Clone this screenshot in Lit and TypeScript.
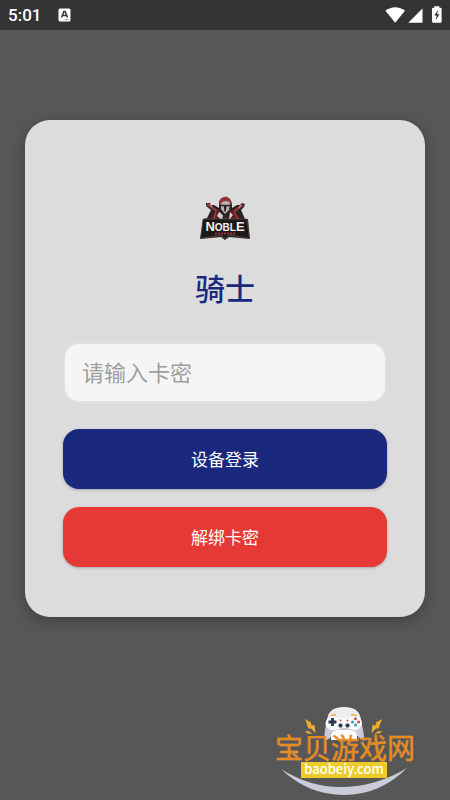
import { LitElement, html, css, svg } from "lit";
import { customElement, state } from "lit/decorators.js";

@customElement("status-bar")
class StatusBar extends LitElement {
  static styles = css`
    :host {
      display: flex;
      align-items: center;
      justify-content: space-between;
      height: 30px;
      padding: 0 8px;
      background: #343434;
      color: #fff;
      font-family: Roboto, sans-serif;
      font-size: 17px;
      font-weight: 500;
      line-height: 32px;
    }
    .group { display: flex; align-items: center; }
    .left { gap: 17px; }
    svg { display: block; }
  `;

  render() {
    return html`
      <div class="group left">
        <span>5:01</span>
        <svg width="13" height="14" viewBox="0 0 13 14" aria-hidden="true">
          <rect x="0.5" y="0.5" width="12" height="13" rx="1.5" fill="#fff" />
          <path d="M3.500 9.500 5.900 3.400h1.200l2.400 6.100M4.600 7.600h3.800" fill="none" stroke="#333" stroke-width="1.500" />
          <path d="M6.500 11.600H11" stroke="#aaa" />
        </svg>
      </div>
      <svg width="58" height="18" viewBox="384 6 58 18" aria-hidden="true">
        <path d="M385.400 10.800C391 6 399.400 6 405 10.800L395.200 22.800Z" fill="#fff" />
        <path d="M408.300 22.700 422.500 8.400V22.700Z" fill="#fff" />
        <path d="M434.300 6.200h5v1.600h1q1.300 0 1.300 1.300v12.300q0 1.300-1.300 1.300h-7q-1.300 0-1.300-1.300V9.100q0-1.300 1.300-1.300h1Z" fill="#fff" />
        <path d="M438 9.800 434.300 15.600h2.300l-.8 4.600 3.600-6h-2.200Z" fill="#333" />
      </svg>
    `;
  }
}

@customElement("knight-emblem")
class KnightEmblem extends LitElement {
  static styles = css`
    :host { display: block; }
    svg { display: block; }
    .name {
      font-family: "Liberation Sans", sans-serif;
      font-weight: 700;
      fill: #f4f1ef;
    }
    .cap { font-size: 13px; }
    .mid { font-size: 10px; }
  `;

  render() {
    return html`
      <svg width="50" height="44" viewBox="200 195 50 44" role="img" aria-label="Noble">
        <path d="M206 202 210 202 211 204 214 204 219 207 219 201 222 197 226 195.500 230 198 232 203 232 207 237 204 240 204 242 202 245 203 244 206 241 209 245 218 248 218 250 238 229 236 225 239 221 236 200 238 203 218 207 217 211 209 206 205Z" fill="#2b2122" />
        <path d="M219 202Q219 196 226 196Q231 197 232 203L230 204Q229 200 226 200T221 205Z" fill="#953235" />
        <path d="M221 203Q222 200 226 200T230 203L229 209 225 213 221 208Z" fill="#b9b3b0" />
        <path d="M221 204.500h3.500l.5 6 1-6h4" fill="none" stroke="#262122" stroke-width="1.400" />
        <path d="M207 203 221 213M243 204 230 213" stroke="#8d3a3d" stroke-width="2.500" />
        <path d="M210 203 212 206M241 204 239 207" stroke="#c88c8b" stroke-width="1.300" />
        <path d="M211 217Q212 211 219 209L223 218M230 209Q237 211 240 218H228" fill="#551e22" />
        <path d="M219 211 225 216 222 219 217 215M230 211 233 214 229 219" fill="#d4cfcb" />
        <path d="M216 211 214 218M234 211 238 218" stroke="#a43b3e" stroke-width="1.500" />
        <path d="M223 214h4l1 5h-6Z" fill="#302728" />
        <path d="M203 218H247L249.500 237.500 229 234 225 237.500 221 234 200.500 237.500Z" fill="#1d191a" stroke="#776562" stroke-width=".5" />
        <text class="name" x="225" y="230" text-anchor="middle"><tspan class="cap">N</tspan><tspan class="mid">OBL</tspan><tspan class="cap">E</tspan></text>
        <path d="M215 232.500H236" stroke="#9a3437" stroke-width="2" stroke-dasharray="2 1" />
      </svg>
    `;
  }
}

@customElement("site-mark")
class SiteMark extends LitElement {
  static styles = css`
    :host { display: block; }
    svg { display: block; }
    .site {
      font: 400 28px "Noto Sans CJK SC", sans-serif;
      fill: #e88a1c;
      stroke: #e8a75c;
      stroke-width: 0.4;
      paint-order: stroke;
    }
    .domain { font: 500 13px "Noto Sans CJK SC", sans-serif; fill: #fff; }
  `;

  render() {
    const bolt = svg`
      <path d="M305 719 311 722.500 311.500 725.500 314.500 725 315.500 733 311 728.500 308.500 728.500Z" fill="#f0ac30" />
      <path d="M304.500 731.500 309 731 310.500 732.500 313 734 308 733.500Z" fill="#f0ac30" />`;
    return html`
      <svg width="144" height="94" viewBox="273 704 144 94" role="img" aria-label="宝贝游戏网 baobeiy.com">
        <path d="M327 722Q327 707 344 707T361 722L362 736H326Z" fill="#eeeef1" />
        <path d="M327 722Q324 730 324.500 741L330 738 334 731H355L359 738 364 741Q364 730 361 722Z" fill="#cacbd8" />
        <path d="M332 716Q338 718 344 718T356 716Q362 717 362 724Q360 731 353 730L346 728H342L335 730Q327 731 325.500 724Q326 717 332 716Z" fill="#fafafa" />
        <path d="M331 740Q330 731 337 730H351Q358 732 357 740Z" fill="#fff" />
        <path d="M330.500 715.500 336 714.500M351 714.500 357 715.500" stroke="#eeae43" stroke-width="1.500" />
        <path d="M332.500 718v8M328.500 722h8" stroke="#29384a" stroke-width="2.800" />
        <g fill="#d64852"><circle cx="355.500" cy="718.700" r="1.500" /><circle cx="358.600" cy="722" r="1.500" /><circle cx="340.500" cy="720.500" r="1" /><circle cx="347.500" cy="720.500" r="1" /></g>
        <g fill="#3f99aa"><circle cx="352.500" cy="722" r="1.500" /><circle cx="355.500" cy="725" r="1.500" /></g>
        <g fill="#293746" stroke="#718193" stroke-width=".6"><circle cx="340.500" cy="725.500" r="2" /><circle cx="347.500" cy="725.500" r="2" /></g>
        ${bolt}
        <g transform="translate(687 0) scale(-1 1)">${bolt}</g>
        <path d="M281 769Q311 788 344 787T407 768Q380 795 344 795T281 769Z" fill="#cacbd8" />
        <rect x="301" y="762" width="86" height="16" fill="#edcc29" />
        <text class="site" x="345" y="759" text-anchor="middle">宝贝游戏网</text>
        <text class="domain" x="344" y="774" text-anchor="middle">baobeiy.com</text>
      </svg>
    `;
  }
}

@customElement("app-root")
class AppRoot extends LitElement {
  static styles = css`
    :host {
      display: flex;
      flex-direction: column;
      position: relative;
      min-height: 100vh;
      background: #575757;
      font-family: "Noto Sans CJK SC", sans-serif;
    }
    * { box-sizing: border-box; }
    main {
      flex: 1;
      display: flex;
      flex-direction: column;
      padding: 90px 25px;
    }
    .card {
      display: flex;
      flex-direction: column;
      padding: 76px 38px 50px;
      border-radius: 25px;
      background: #dcdcdc;
      box-shadow: 0 4px 14px rgba(0, 0, 0, 0.28);
    }
    knight-emblem { align-self: center; }
    h1 {
      margin: 25px 0 33px;
      color: #1a287e;
      font-size: 30px;
      font-weight: 500;
      line-height: 44px;
      text-align: center;
    }
    input {
      width: 100%;
      height: 61px;
      margin-bottom: 26px;
      padding: 0 17px 4px;
      border: 2px solid #e0e0e0;
      border-radius: 16px;
      background: #f5f5f5;
      color: #333;
      font: 400 22px "Noto Sans CJK SC", sans-serif;
      outline: none;
    }
    input::placeholder { color: #9f9f9f; opacity: 1; }
    button {
      width: 100%;
      height: 60px;
      padding: 0 0 2px;
      border: 0;
      border-radius: 16px;
      color: #fff;
      font: 400 17px "Noto Sans CJK SC", sans-serif;
      box-shadow: 0 1px 3px rgba(0, 0, 0, 0.25);
    }
    .actions { display: flex; flex-direction: column; gap: 18px; }
    .login { background: #1a287e; }
    .unbind { background: #e53935; }
    site-mark { position: absolute; right: 33px; bottom: 2px; }
  `;

  @state() private key = "";

  private onInput(e: Event) {
    this.key = (e.target as HTMLInputElement).value;
  }

  render() {
    return html`
      <status-bar></status-bar>
      <main>
        <form class="card" @submit=${(e: Event) => e.preventDefault()}>
          <knight-emblem></knight-emblem>
          <h1>骑士</h1>
          <input type="text" aria-label="请输入卡密" placeholder="请输入卡密" .value=${this.key} @input=${this.onInput} />
          <div class="actions">
            <button class="login" type="submit">设备登录</button>
            <button class="unbind" type="button">解绑卡密</button>
          </div>
        </form>
      </main>
      <site-mark></site-mark>
    `;
  }
}
